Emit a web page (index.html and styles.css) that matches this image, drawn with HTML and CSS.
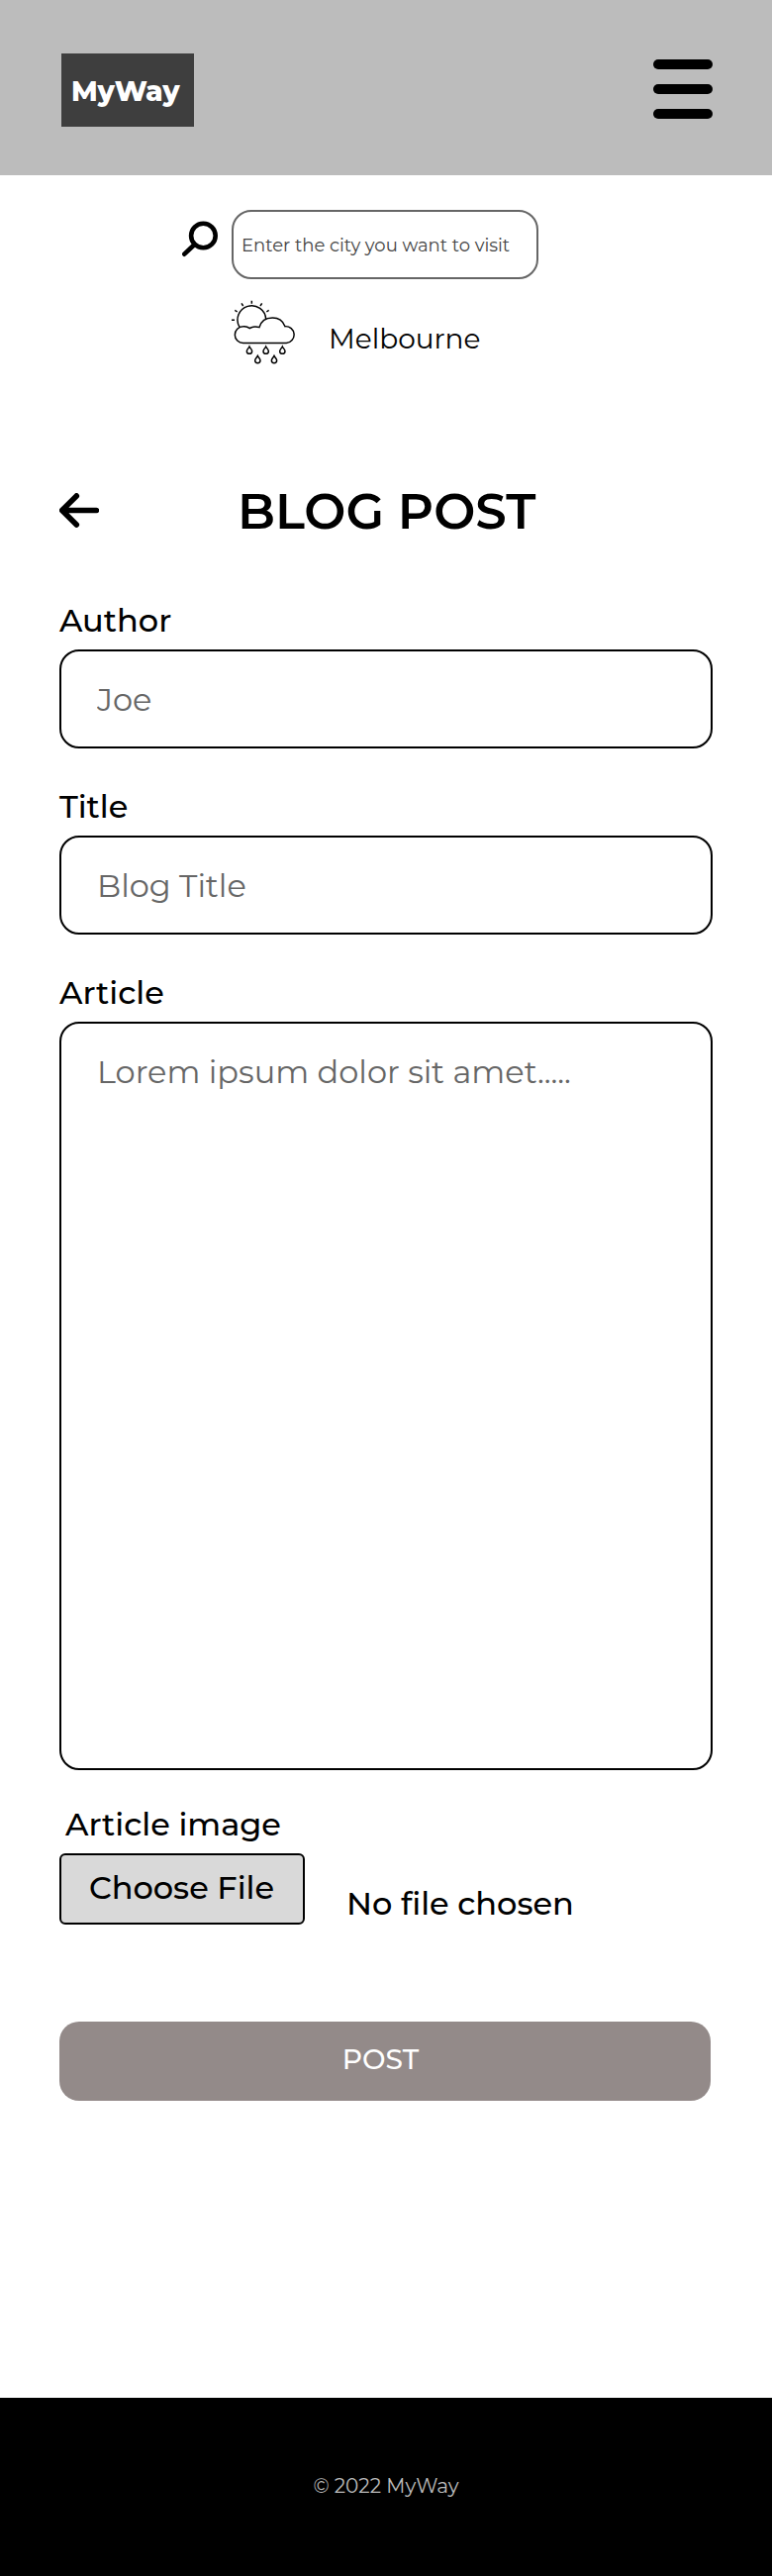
FILE: index.html
```
<!DOCTYPE html>
<html lang="en">
<head>
<meta charset="utf-8">
<title>MyWay – Blog post</title>
<link rel="stylesheet" href="styles.css">
</head>
<body>
<header class="header">
  <a class="logo">MyWay</a>
  <div class="menu"><span class="bar"></span><span class="bar"></span><span class="bar"></span></div>
</header>
<main class="main">
  <div class="search">
    <svg class="search-icon" viewBox="0 0 40 40" fill="none" stroke="#000">
      <circle cx="21.4" cy="16" r="12.3" stroke-width="4.6"/>
      <path d="M12.5 25 2.3 34.7" stroke-width="4.6" stroke-linecap="round"/>
    </svg>
    <input class="search-input" type="text" placeholder="Enter the city you want to visit">
  </div>
  <div class="weather">
    <svg class="weather-icon" viewBox="0 0 240 240" fill="none" stroke="#000" stroke-width="4.4">
      <path d="M51 106A43 43 0 1 1 131 82"/>
      <path d="M62 154.5A25 25 0 0 1 62 104.500Q73 103 82 110Q94 102 111 107C117 85 135 78 151 78C168 78 183 88 189 104A25 25 0 0 1 193 154.500Z"/>
      <path d="M27 85H36M37 55 44 60M57 34 62 42M88 26V35M119 34 114 42M140 55 133 60"/>
      <path id="drop" d="M81 165C78 171 73 175 73 179A8 8 0 0 0 89 179C89 175 84 171 81 165Z"/>
      <use href="#drop" x="50"/>
      <use href="#drop" x="100"/>
      <use href="#drop" x="25" y="28"/>
      <use href="#drop" x="75" y="28"/>
    </svg>
    <span class="city">Melbourne</span>
  </div>
  <div class="heading">
    <svg class="back" viewBox="0 0 40 36" fill="none" stroke="#000" stroke-width="5.6" stroke-linecap="round" stroke-linejoin="round">
      <path d="M17.300 2.900 2.700 17.500 17.300 32.100M3 17.500H37.400"/>
    </svg>
    <h1 class="title">BLOG POST</h1>
  </div>
  <form class="form">
    <label class="label">Author</label>
    <input class="field" type="text" placeholder="Joe">
    <label class="label">Title</label>
    <input class="field" type="text" placeholder="Blog Title">
    <label class="label">Article</label>
    <textarea class="field area" placeholder="Lorem ipsum dolor sit amet....."></textarea>
    <label class="label image-label">Article image</label>
    <div class="file">
      <button class="choose" type="button">Choose File</button>
      <span class="file-name">No file chosen</span>
    </div>
    <button class="post" type="button">POST</button>
  </form>
</main>
<footer class="footer">© 2022 MyWay</footer>
</body>
</html>
```
FILE: styles.css
```
* { box-sizing: border-box; }
body {
  margin: 0;
  height: 2602px;
  display: flex;
  flex-direction: column;
  background: #fff;
  color: #000;
  font-family: Montserrat, Inter, sans-serif;
}
input, textarea, button { font-family: inherit; margin: 0; outline: none; }
svg { display: block; flex: none; }

.header {
  height: 177px;
  flex: none;
  padding: 54px 60px 0 62px;
  display: flex;
  justify-content: space-between;
  background: #bcbcbc;
}
.logo {
  width: 134px;
  height: 74px;
  padding-left: 10px;
  background: #3e3e3e;
  color: #fff;
  font-size: 28px;
  font-weight: 800;
  letter-spacing: -0.2px;
  line-height: 77px;
}
.menu { display: flex; flex-direction: column; gap: 15px; padding-top: 6px; }
.bar { width: 60px; height: 10px; border-radius: 5px; background: #000; }

.main { flex: 1; padding-top: 35px; }
.search { display: flex; padding-left: 184px; }
.search-icon { width: 40px; height: 40px; margin: 10px 10px 0 0; }
.search-input {
  width: 310px;
  height: 70px;
  padding: 2px 6px 0 8px;
  border: 2px solid #666;
  border-radius: 20px;
  background: #fff;
  font-size: 18px;
}
.search-input::placeholder { color: #444; opacity: 1; }
.weather { display: flex; padding: 13px 0 0 225px; }
.weather-icon { width: 80px; height: 80px; }
.city { margin: 27px 0 0 27px; font-size: 28px; line-height: 40px; }

.heading { display: flex; padding: 111px 0 0 60px; }
.back { width: 40px; height: 36px; margin-top: 12px; }
.title { margin: 1px 0 0 140px; font-size: 50px; font-weight: 600; line-height: 60px; }

.form { display: flex; flex-direction: column; padding: 60px 60px 0; }
.label { margin-bottom: 9px; font-size: 32px; font-weight: 500; line-height: 40px; }
.field {
  width: 660px;
  height: 100px;
  margin-bottom: 39px;
  padding: 0 36px;
  border: 2px solid #000;
  border-radius: 20px;
  background: #fff;
  font-size: 32px;
}
.field::placeholder { color: #666; opacity: 1; }
.area {
  height: 756px;
  margin-bottom: 35px;
  padding-top: 29px;
  line-height: 40px;
  resize: none;
}
.image-label { padding-left: 6px; }
.file { display: flex; }
.choose {
  width: 248px;
  height: 72px;
  padding: 0 1px 3px 0;
  border: 2px solid #000;
  border-radius: 6px;
  background: #d9d9d9;
  color: #000;
  font-size: 32px;
  font-weight: 500;
}
.file-name { margin: 31px 0 0 42px; font-size: 32px; font-weight: 500; line-height: 40px; }
.post {
  width: 658px;
  height: 80px;
  margin-top: 98px;
  padding: 0 9px 4px 0;
  border: 0;
  border-radius: 20px;
  background: #938a89;
  color: #fff;
  font-size: 28px;
  font-weight: 500;
}

.footer {
  height: 180px;
  flex: none;
  background: #000;
  color: #bcbcbc;
  font-size: 20px;
  line-height: 179px;
  text-align: center;
}
```
